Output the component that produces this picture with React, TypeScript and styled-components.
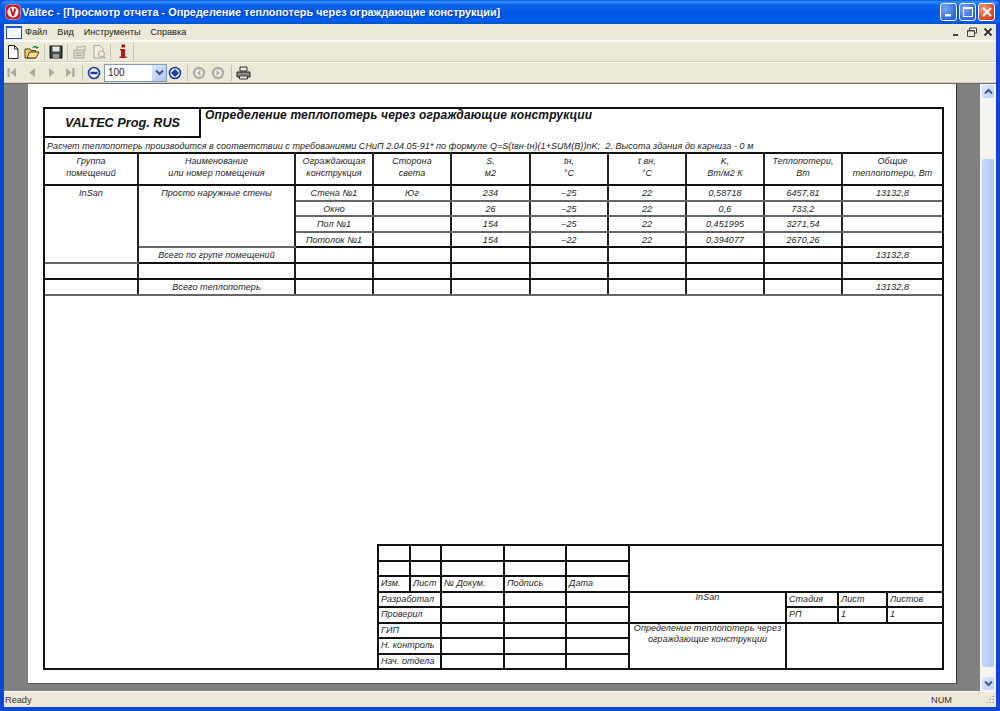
import React from "react";
import styled, { createGlobalStyle } from "styled-components";

const Global = createGlobalStyle`
  html, body { margin: 0; padding: 0; width: 1000px; height: 711px; overflow: hidden; background: #0a4fd8; }
  #root { width: 1000px; height: 711px; }
  * { box-sizing: border-box; }
`;

const Win = styled.div`
  width: 1000px; height: 711px; display: flex; flex-direction: column;
  background: #0b46d6;
  padding: 0 4px 4px 4px;
  font-family: "Liberation Sans", Arial, sans-serif;
  border-radius: 7px 7px 0 0;
`;
const TitleBar = styled.div`
  height: 24px; margin: 0 -4px; flex: none; display: flex; align-items: center; padding: 0 5px 0 5px;
  background: linear-gradient(180deg, #0a5ad8 0%, #3a93ff 8%, #0a62ea 20%, #0055e3 55%, #0160f0 85%, #0a4fc8 100%);
  border-radius: 7px 7px 0 0;
`;
const TitleText = styled.div`
  color: #fff; font: bold 10.900px "Liberation Sans", sans-serif; margin-left: 1px;
  text-shadow: 1px 1px 0 #0a3bb0; flex: 1; white-space: nowrap;
`;
const CapBtn = styled.div<{ $red?: boolean }>`
  width: 17px; height: 18px; margin-left: 2px; border: 1px solid #fff; border-radius: 3px; display: flex; align-items: center; justify-content: center;
  background: ${(p) => (p.$red
    ? "radial-gradient(circle at 30% 30%, #f0a080, #d8502c 60%, #b83010)"
    : "radial-gradient(circle at 30% 30%, #7fa8f4, #3a70e0 60%, #2450c8)")};
`;
const MenuBar = styled.div`
  height: 17px; flex: none; background: #ece9d8; display: flex; align-items: center; border-bottom: 1px solid #f8f7f0; position: relative;
`;
const MenuDoc = styled.div`
  width: 16px; height: 13px; margin: 0 3px 0 2px; background: #f4f8ff; border: 1px solid #2a50a0; border-top: 2px solid #1a58c8; flex: none;
`;
const MenuItem = styled.span`
  font: 9.100px "Liberation Sans", sans-serif; color: #222; margin-right: 10px; white-space: nowrap;
`;
const MdiBtns = styled.div`
  margin-left: auto; display: flex; gap: 5px; padding-right: 3px; align-items: center;
`;
const ToolRow = styled.div`
  height: 21px; flex: none; background: #ece9d8; display: flex; align-items: center; border-bottom: 1px solid #d4d0c0; border-top: 1px solid #fafaf4;
`;
const ToolInner = styled.div`
  display: flex; align-items: center; height: 100%; border-right: 1px solid #c8c4b4;
`;
const IconSlot = styled.div<{ $w?: number }>`
  width: ${(p) => p.$w ?? 19}px; height: 18px; display: flex; align-items: center; justify-content: center; flex: none;
`;
const Sep = styled.div<{ $l?: number; $r?: number }>`
  width: 1px; height: 16px; background: #c8c4b4; flex: none;
  margin: 0 ${(p) => p.$r ?? 2}px 0 ${(p) => p.$l ?? 2}px;
`;
const Combo = styled.div`
  width: 63px; height: 18px; background: #fff; border: 1px solid #7f9db9; display: flex; align-items: center; justify-content: space-between;
  font: 10px "Liberation Sans", sans-serif; color: #222; padding-left: 3px; flex: none; margin: 0 1px;
`;
const ComboBtn = styled.div`
  width: 14px; height: 16px; background: linear-gradient(135deg, #dbe6fb, #aec5f2); display: flex; align-items: center; justify-content: center;
`;
const Work = styled.div`
  flex: 1; min-height: 0; display: flex; background: #808080; border-top: 1px solid #6c6c6c;
`;
const Viewport = styled.div`
  flex: 1; min-width: 0; padding: 0 23px 7px 24px; display: flex; flex-direction: column;
`;
const Page = styled.div`
  flex: 1; min-height: 0; background: #fff; padding: 23px 12px 13px 15px; display: flex; border-right: 1px solid #333; border-bottom: 1px solid #555;
`;
const Sheet = styled.div`
  flex: 1; border: 2px solid #111; display: flex; flex-direction: column; min-width: 0;
`;
const Heading = styled.div`
  display: flex; height: 29px; flex: none;
`;
const Brand = styled.div`
  width: 156px; border-right: 2px solid #111; border-bottom: 2px solid #111; font: italic bold 12.700px "Liberation Sans", sans-serif;
  display: flex; align-items: center; justify-content: center; color: #111; padding-left: 1px;
`;
const ReportTitle = styled.div`
  flex: 1; font: italic bold 12px "Liberation Sans", sans-serif; color: #111; padding: 0 0 0 4px; letter-spacing: 0.15px; margin-top: -1px;
`;
const Note = styled.div`
  height: 14px; flex: none; font: italic 9px "Liberation Sans", sans-serif; color: #222; padding: 3px 0 0 2px; white-space: pre; letter-spacing: 0.07px;
`;
const ReportTable = styled.table`
  border-collapse: collapse; table-layout: fixed; width: 897px; flex: none; margin-bottom: auto;
  border-top: 2px solid #111; border-bottom: 2px solid #111;
`;
const Row = styled.tr<{ $h: number; $bold?: boolean }>`
  height: ${(p) => p.$h}px;
  & > td, & > th { border-bottom: ${(p) => (p.$bold ? "2px solid #111" : "2px solid #666")}; }
`;
const Cell = styled.td`
  border-right: 2px solid #222; padding: 1px 0 0; text-align: center; vertical-align: top; overflow: hidden; white-space: nowrap;
  font: italic 9px/12px "Liberation Sans", sans-serif; color: #222; letter-spacing: 0.08px;
  &:last-child { border-right: none; }
`;
const HeadCell = styled(Cell).attrs({ as: "th" })`
  font-weight: normal; border-bottom: 2px solid #111;
`;
const SpanCell = styled(Cell)`
  border-bottom: 2px solid #111;
`;
const Stamp = styled.div`
  flex: none; align-self: flex-end; width: 567px; display: grid;
  grid-template-columns: 32px 31px 63px 62px 63px 314px; grid-template-rows: repeat(8, 15.500px);
  border-top: 2px solid #111; border-left: 2px solid #111; margin: 0 -2px -2px 0;
`;
const StampCell = styled.div<{ $col?: string }>`
  grid-column: ${(p) => p.$col ?? "auto"};
  border-right: 2px solid #111; border-bottom: 2px solid #111; min-width: 0; overflow: hidden;
  font: italic 9px/13px "Liberation Sans", sans-serif; color: #222; white-space: nowrap; letter-spacing: 0.08px;
  padding-left: 2px;
`;
const RightGrid = styled.div`
  grid-column: 6; grid-row: 4 / span 5; display: grid;
  grid-template-columns: 157px 52px 49px 1fr; grid-template-rows: 15.500px 15.500px 1fr; min-width: 0;
`;
const RightCell = styled.div<{ $col?: string; $row?: string; $center?: boolean }>`
  grid-column: ${(p) => p.$col ?? "auto"}; grid-row: ${(p) => p.$row ?? "auto"}; min-width: 0; overflow: hidden;
  border-right: 2px solid #111; border-bottom: 2px solid #111;
  font: italic 9px/${(p) => (p.$center ? 11 : 13)}px "Liberation Sans", sans-serif; color: #222; letter-spacing: 0.08px;
  padding: 0 0 0 ${(p) => (p.$center ? 0 : 2)}px; text-align: ${(p) => (p.$center ? "center" : "left")}; white-space: pre-line;
`;
const RaisedText = styled.div`
  margin-top: -1px;
`;
const TopBlank = styled.div`
  grid-column: 6; grid-row: 1 / span 3; border-bottom: 2px solid #111; border-right: 2px solid #111;
`;
const Scrollbar = styled.div`
  width: 16px; flex: none; background: #f5f4ee; display: flex; flex-direction: column; padding: 1px 2px 1px 2px;
`;
const ScrollBtn = styled.div`
  height: 13px; width: 12px; background: linear-gradient(135deg, #e0e9fd, #bccff7); border-radius: 2px; display: flex; align-items: center; justify-content: center; flex: none;
`;
const TrackGap = styled.div<{ $h: number }>`
  height: ${(p) => p.$h}px; flex: none;
`;
const Thumb = styled.div`
  flex: 1; background: linear-gradient(90deg, #c4d5fb, #bdd0f8 50%, #b2c7f2); border-radius: 2px;
`;
const Status = styled.div`
  height: 16px; flex: none; background: #ece9d8; border-top: 1px solid #fbfaf4; display: flex; align-items: center; font: 9.200px "Liberation Sans", sans-serif; color: #333; padding-left: 1px;
`;
const StatusRight = styled.div`
  margin-left: auto; width: 65px; display: flex; align-items: center; justify-content: space-between; padding-right: 1px;
`;

const Chevron = ({ down }: { down?: boolean }) => (
  <svg width="9" height="7" viewBox="0 0 9 7"><path d={down ? "M1 1.500 4.500 5 8 1.500" : "M1 5.500 4.500 2 8 5.500"} fill="none" stroke="#3c5a98" strokeWidth="2" /></svg>
);
const Circle = ({ inner }: { inner: "minus" | "plus" | "left" | "right" }) => {
  const off = inner === "left" || inner === "right";
  const color = off ? "#b0aea2" : "#1e3f9c";
  return (
    <svg width="14" height="14" viewBox="0 0 14 14">
      <circle cx="7" cy="7" r={off ? 5 : 5.5} fill={off ? "#efeee6" : "#e8edf8"} stroke={color} strokeWidth={off ? 2.4 : 1.6} />
      {inner === "minus" && <rect x="3.500" y="5.800" width="7" height="2.400" fill={color} />}
      {inner === "plus" && <path d="M7 3 11 7 7 11 3 7Z" fill={color} />}
      {inner === "left" && <path d="M8.500 4 5 7l3.500 3Z" fill={color} />}
      {inner === "right" && <path d="M5.500 4 9 7l-3.500 3Z" fill={color} />}
    </svg>
  );
};

const cols = [93, 157, 78, 78, 79, 78, 78, 78, 78, 100];
const rows: { wall: string; side: string; s: string; tn: string; tv: string; k: string; q: string; sum: string; h: number }[] = [
  { wall: "Стена №1", side: "Юг", s: "234", tn: "–25", tv: "22", k: "0,58718", q: "6457,81", sum: "13132,8", h: 16 },
  { wall: "Окно", side: "", s: "26", tn: "–25", tv: "22", k: "0,6", q: "733,2", sum: "", h: 15 },
  { wall: "Пол №1", side: "", s: "154", tn: "–25", tv: "22", k: "0,451995", q: "3271,54", sum: "", h: 16 },
  { wall: "Потолок №1", side: "", s: "154", tn: "–22", tv: "22", k: "0,394077", q: "2670,26", sum: "", h: 15 },
];
const heads = [
  ["Группа", "помещений"], ["Наименование", "или номер помещения"], ["Ограждающая", "конструкция"], ["Сторона", "света"],
  ["S,", "м2"], ["tн,", "°C"], ["t вн,", "°C"], ["K,", "Вт/м2 К"], ["Теплопотери,", "Вт"], ["Общие", "теплопотери, Вт"],
];
const Empties = ({ n }: { n: number }) => <>{Array.from({ length: n }, (_, i) => <Cell key={i} />)}</>;

export default function App() {
  return (
    <Win>
      <Global />
      <TitleBar>
        <svg width="16" height="16" viewBox="0 0 16 16">
          <rect x="0.500" y="0.500" width="15" height="15" rx="4" fill="#c8141c" stroke="#f0d0c8" strokeWidth="0.600" />
          <circle cx="8" cy="8" r="5.600" fill="#fff" />
          <path d="M4.600 4.400h2.200L8 9l1.200-4.600h2.200L8.900 12.200H7.100Z" fill="#c8141c" />
        </svg>
        <TitleText>Valtec - [Просмотр отчета - Определение теплопотерь через ограждающие конструкции]</TitleText>
        <CapBtn><svg width="12" height="12" viewBox="0 0 12 12"><rect x="2" y="8" width="6" height="2.400" fill="#fff" /></svg></CapBtn>
        <CapBtn><svg width="12" height="12" viewBox="0 0 12 12"><rect x="1.500" y="1.500" width="9" height="9" fill="none" stroke="#fff" /><rect x="1.500" y="1" width="9" height="2" fill="#fff" /></svg></CapBtn>
        <CapBtn $red><svg width="12" height="12" viewBox="0 0 12 12"><path d="M2 2l8 8M10 2l-8 8" stroke="#fff" strokeWidth="2" /></svg></CapBtn>
      </TitleBar>
      <MenuBar>
        <MenuDoc />
        <MenuItem>Файл</MenuItem>
        <MenuItem>Вид</MenuItem>
        <MenuItem>Инструменты</MenuItem>
        <MenuItem>Справка</MenuItem>
        <MdiBtns>
          <svg width="10" height="10" viewBox="0 0 10 10"><rect x="2" y="7" width="5" height="2" fill="#444" /></svg>
          <svg width="12" height="11" viewBox="0 0 12 11"><path d="M3.500 3V1h7v5H8.500M1.500 3.500h7v6h-7Z M1.500 4h7" fill="none" stroke="#444" /></svg>
          <svg width="10" height="10" viewBox="0 0 10 10"><path d="M1.500 1.500l7 7M8.500 1.500l-7 7" stroke="#333" strokeWidth="1.800" /></svg>
        </MdiBtns>
      </MenuBar>
      <ToolRow>
        <ToolInner>
          <IconSlot $w={17}><svg width="14" height="16" viewBox="0 0 14 16"><path d="M2.500 1.500h6l3.500 3.500v9.500h-9.500Z" fill="#fff" stroke="#222" /><path d="M8.500 1.500V5H12" fill="none" stroke="#222" /></svg></IconSlot>
          <IconSlot $w={21}><svg width="16" height="14" viewBox="0 0 16 14"><path d="M1 4h5l1 1.500h4.500V13H1Z" fill="#e8d070" stroke="#4a4210" /><path d="M3 13l2.500-6H15l-3 6Z" fill="#f4e08c" stroke="#4a4210" /><path d="M9 3c1-2 3-2 4 0l1.500-1" fill="none" stroke="#1c7a2c" strokeWidth="1.300" /></svg></IconSlot>
          <Sep />
          <IconSlot $w={18}><svg width="14" height="14" viewBox="0 0 14 14"><rect x="1" y="1" width="12" height="12" fill="#3a4a40" stroke="#111" /><rect x="3.500" y="1.500" width="7" height="5" fill="#e8e8e0" /><rect x="4" y="9" width="6" height="4" fill="#999" /></svg></IconSlot>
          <Sep />
          <IconSlot $w={20}><svg width="16" height="14" viewBox="0 0 16 14"><path d="M2 5h10v8H2Z" fill="#dcdacc" stroke="#aaa89a" /><path d="M5 5V2h4l4-1v5" fill="none" stroke="#aaa89a" /><path d="M4 8h6M4 10.500h6" stroke="#aaa89a" /></svg></IconSlot>
          <IconSlot $w={18}><svg width="15" height="16" viewBox="0 0 15 16"><path d="M2 1.500h6l3 3V14H2Z" fill="#f0eee4" stroke="#aaa89a" /><circle cx="9.500" cy="10" r="3" fill="#ecebe0" stroke="#aaa89a" /><path d="M11.500 12.500l2 2" stroke="#aaa89a" strokeWidth="1.500" /></svg></IconSlot>
          <Sep />
          <IconSlot $w={20}><svg width="10" height="15" viewBox="0 0 10 15"><rect x="3.500" y="0.500" width="3.500" height="3" fill="#b01010" /><path d="M2 5h5v7.500h1.500V14H1.500v-1.500H3V6.500H2Z" fill="#b81414" /></svg></IconSlot>
        </ToolInner>
      </ToolRow>
      <ToolRow>
        <IconSlot $w={16}><svg width="10" height="11" viewBox="0 0 10 11"><rect x="0.500" y="1" width="2.200" height="9" fill="#a9a89e" /><path d="M9 1v9L3.500 5.500Z" fill="#a9a89e" /></svg></IconSlot>
        <IconSlot $w={24}><svg width="8" height="11" viewBox="0 0 8 11"><path d="M7 1v9L1.500 5.500Z" fill="#a9a89e" /></svg></IconSlot>
        <IconSlot $w={16}><svg width="8" height="11" viewBox="0 0 8 11"><path d="M1 1v9l5.500-4.500Z" fill="#a9a89e" /></svg></IconSlot>
        <IconSlot $w={20}><svg width="10" height="11" viewBox="0 0 10 11"><path d="M1 1v9l5.500-4.500Z" fill="#a9a89e" /><rect x="7.300" y="1" width="2.200" height="9" fill="#a9a89e" /></svg></IconSlot>
        <Sep />
        <IconSlot $w={18}><Circle inner="minus" /></IconSlot>
        <Combo>100<ComboBtn><Chevron down /></ComboBtn></Combo>
        <IconSlot $w={14}><Circle inner="plus" /></IconSlot>
        <Sep $l={5} $r={3} />
        <IconSlot $w={16}><Circle inner="left" /></IconSlot>
        <IconSlot $w={22}><Circle inner="right" /></IconSlot>
        <Sep />
        <IconSlot $w={18}><svg width="15" height="14" viewBox="0 0 15 14"><path d="M4 1h7v4H4Z" fill="#e8e8e0" stroke="#333" /><path d="M1 6h13v5H1Z" fill="#8a8a84" stroke="#222" /><path d="M3.500 10h8v3h-8Z" fill="#eee" stroke="#333" /></svg></IconSlot>
      </ToolRow>
      <Work>
        <Viewport>
          <Page>
            <Sheet>
              <Heading>
                <Brand>VALTEC Prog. RUS</Brand>
                <ReportTitle>Определение теплопотерь через ограждающие конструкции</ReportTitle>
              </Heading>
              <Note>Расчет теплопотерь производится в соответствии с требованиями СНиП 2.04.05-91* по формуле Q=S(tвн-tн)(1+SUM(B))nK;  2. Высота здания до карниза - 0 м</Note>
              <ReportTable>
                <colgroup>{cols.map((w, i) => <col key={i} style={{ width: w }} />)}</colgroup>
                <tbody>
                  <Row $h={32} $bold>
                    {heads.map((h, i) => <HeadCell key={i}>{h[0]}<br />{h[1]}</HeadCell>)}
                  </Row>
                  {rows.map((r, i) => (
                    <Row key={i} $h={r.h} $bold={i === 3}>
                      {i === 0 && <SpanCell rowSpan={5}>InSan</SpanCell>}
                      {i === 0 && <SpanCell rowSpan={4}>Просто наружные стены</SpanCell>}
                      <Cell>{r.wall}</Cell><Cell>{r.side}</Cell><Cell>{r.s}</Cell><Cell>{r.tn}</Cell><Cell>{r.tv}</Cell><Cell>{r.k}</Cell><Cell>{r.q}</Cell><Cell>{r.sum}</Cell>
                    </Row>
                  ))}
                  <Row $h={16} $bold><Cell>Всего по групе помещений</Cell><Empties n={7} /><Cell>13132,8</Cell></Row>
                  <Row $h={16} $bold><Empties n={10} /></Row>
                  <Row $h={16}><Cell /><Cell>Всего теплопотерь</Cell><Empties n={7} /><Cell>13132,8</Cell></Row>
                </tbody>
              </ReportTable>
              <Stamp>
                {Array.from({ length: 10 }, (_, i) => <StampCell key={i} />)}
                <TopBlank />
                <StampCell>Изм.</StampCell><StampCell>Лист</StampCell><StampCell>№ Докум.</StampCell><StampCell>Подпись</StampCell><StampCell>Дата</StampCell>
                {["Разработал", "Проверил", "ГИП", "Н. контроль", "Нач. отдела"].map((t) => (
                  <React.Fragment key={t}>
                    <StampCell $col="span 2">{t}</StampCell><StampCell /><StampCell /><StampCell />
                  </React.Fragment>
                ))}
                <RightGrid>
                  <RightCell $col="1" $row="1 / span 2" $center><RaisedText>InSan</RaisedText></RightCell>
                  <RightCell>Стадия</RightCell><RightCell>Лист</RightCell><RightCell>Листов</RightCell>
                  <RightCell>РП</RightCell><RightCell>1</RightCell><RightCell>1</RightCell>
                  <RightCell $col="1" $row="3" $center><RaisedText>{"Определение теплопотерь через\nограждающие конструкции"}</RaisedText></RightCell>
                  <RightCell $col="2 / span 3" $row="3" />
                </RightGrid>
              </Stamp>
            </Sheet>
          </Page>
        </Viewport>
        <Scrollbar>
          <ScrollBtn><Chevron /></ScrollBtn>
          <TrackGap $h={61} />
          <Thumb />
          <TrackGap $h={10} />
          <ScrollBtn><Chevron down /></ScrollBtn>
        </Scrollbar>
      </Work>
      <Status>Ready<StatusRight>NUM
        <svg width="12" height="12" viewBox="0 0 12 12"><path d="M10 2v1M7 5v1M10 5v1M4 8v1M7 8v1M10 8v1" stroke="#b0ac98" strokeWidth="2" /></svg>
      </StatusRight></Status>
    </Win>
  );
}
